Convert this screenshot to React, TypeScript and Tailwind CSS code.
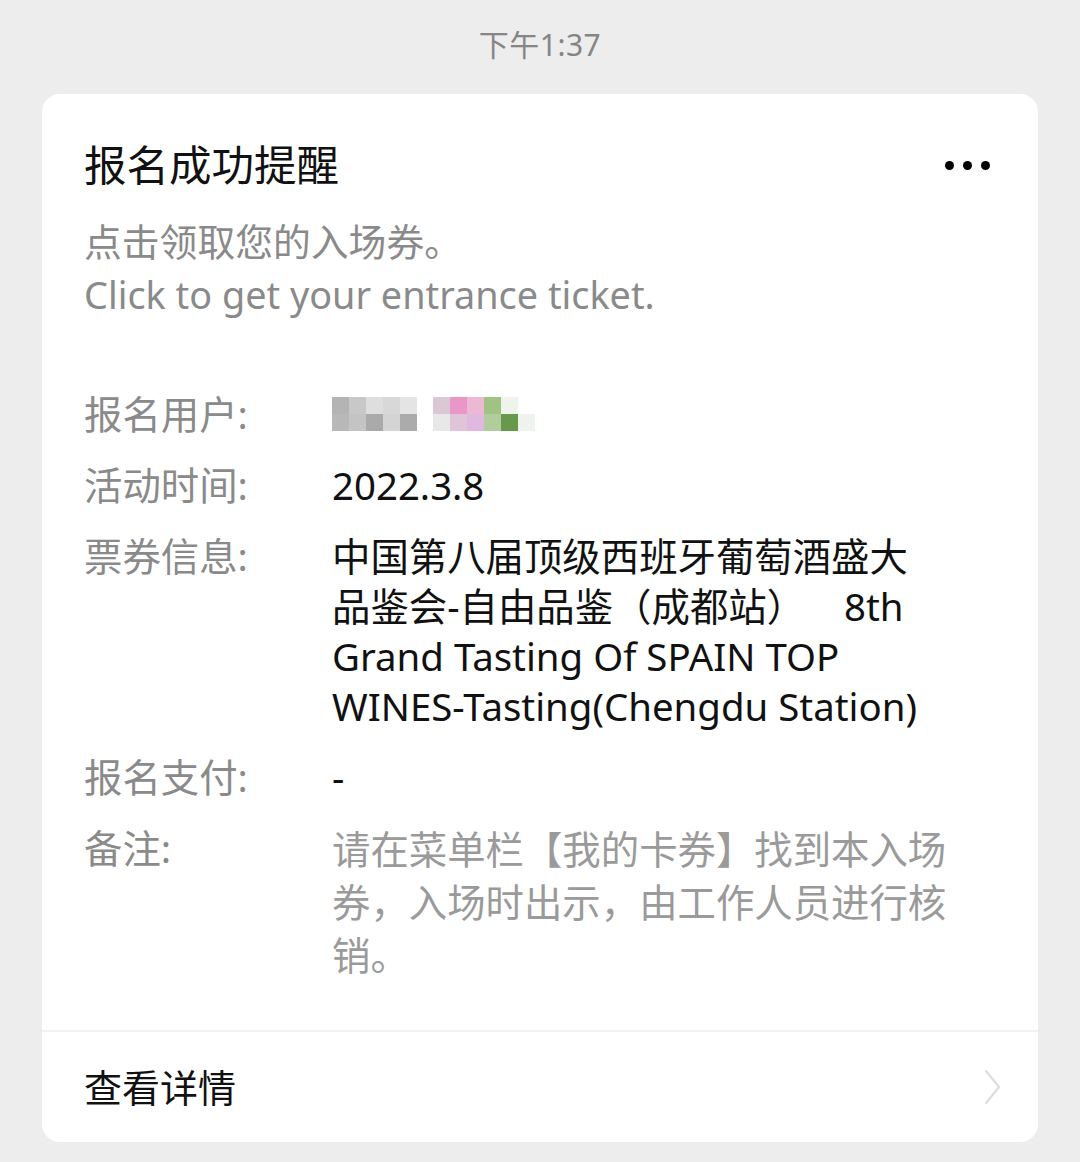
import React from "react";

const F = { fontFamily: '"Noto Sans", "Noto Sans CJK SC", sans-serif' };

function Row({ label, children, muted }: { label: string; children: React.ReactNode; muted?: boolean }) {
  return (
    <div className="flex">
      <div className="w-[248px] shrink-0 text-[#8a8a8a]">{label}</div>
      <div className={muted ? "text-[#9a9a9a]" : "text-[#111111]"}>{children}</div>
    </div>
  );
}

export default function App() {
  return (
    <div className="w-[1080px] h-[1162px] bg-[#ededed] flex flex-col items-center overflow-hidden" style={F}>
      <div className="h-[94px] pt-[24px] text-[30px] leading-[42px] text-[#858585] tracking-[0.5px]">下午1:37</div>
      <div className="w-[996px] bg-white rounded-[18px] flex flex-col">
        <div className="px-[42px] pt-[45px] pb-[48px]">
          <div className="flex items-center justify-between">
            <div className="text-[42.5px] leading-[52px] text-[#111111]">报名成功提醒</div>
            <div className="flex gap-[9px] mr-[6px]">
              <span className="w-[9px] h-[9px] rounded-full bg-black" />
              <span className="w-[9px] h-[9px] rounded-full bg-black" />
              <span className="w-[9px] h-[9px] rounded-full bg-black" />
            </div>
          </div>
          <div className="mt-[24px] text-[37.8px] leading-[53px] text-[#8a8a8a]">
            <div>点击领取您的入场券。</div>
            <div>Click to get your entrance ticket.</div>
          </div>
          <div className="mt-[68px] flex flex-col gap-[21px] text-[38.4px] leading-[50px]">
            <Row label="报名用户:">
              <div className="flex items-center h-[50px] gap-[16px]">
                <div className="flex flex-col">
                  <div className="flex">
                    <span className="w-[17px] h-[17px] bg-[#b4b4b4]" />
                    <span className="w-[17px] h-[17px] bg-[#c8c8c8]" />
                    <span className="w-[17px] h-[17px] bg-[#dedede]" />
                    <span className="w-[17px] h-[17px] bg-[#d8d8d8]" />
                    <span className="w-[17px] h-[17px] bg-[#e4e4e4]" />
                  </div>
                  <div className="flex">
                    <span className="w-[17px] h-[17px] bg-[#b8b8b8]" />
                    <span className="w-[17px] h-[17px] bg-[#c4c4c4]" />
                    <span className="w-[17px] h-[17px] bg-[#aaaaaa]" />
                    <span className="w-[17px] h-[17px] bg-[#d4d4d4]" />
                    <span className="w-[17px] h-[17px] bg-[#ababab]" />
                  </div>
                </div>
                <div className="flex flex-col">
                  <div className="flex">
                    <span className="w-[17px] h-[17px] bg-[#dcc8d4]" />
                    <span className="w-[17px] h-[17px] bg-[#e897c8]" />
                    <span className="w-[17px] h-[17px] bg-[#ecb8d4]" />
                    <span className="w-[17px] h-[17px] bg-[#a0c282]" />
                    <span className="w-[17px] h-[17px] bg-[#eef3ec]" />
                  </div>
                  <div className="flex">
                    <span className="w-[17px] h-[17px] bg-[#e8e8e8]" />
                    <span className="w-[17px] h-[17px] bg-[#e0c4d8]" />
                    <span className="w-[17px] h-[17px] bg-[#e0b8e0]" />
                    <span className="w-[17px] h-[17px] bg-[#b2cc9e]" />
                    <span className="w-[17px] h-[17px] bg-[#66994c]" />
                    <span className="w-[17px] h-[17px] bg-[#eef3ec]" />
                  </div>
                </div>
              </div>
            </Row>
            <Row label="活动时间:">2022.3.8</Row>
            <Row label="票券信息:">
              <div>中国第八届顶级西班牙葡萄酒盛大</div>
              <div className="whitespace-pre">品鉴会-自由品鉴（成都站）   <span className="pl-[9px]">8th</span></div>
              <div>Grand Tasting Of SPAIN TOP</div>
              <div>WINES-Tasting(Chengdu Station)</div>
            </Row>
            <Row label="报名支付:">-</Row>
            <Row label="备注:" muted>
              <div className="leading-[53px]">
                <div>请在菜单栏【我的卡券】找到本入场</div>
                <div>券，入场时出示，由工作人员进行核</div>
                <div>销。</div>
              </div>
            </Row>
          </div>
        </div>
        <div className="h-[2px] bg-[#f2f2f2]" />
        <div className="h-[110px] pl-[42px] pr-[36px] flex items-center justify-between">
          <div className="text-[38px] text-[#111111]">查看详情</div>
          <svg width="18" height="36" viewBox="0 0 18 36">
            <path d="M2 2 L15 18 L2 34" fill="none" stroke="#dcdcdc" strokeWidth="2" strokeLinecap="round" strokeLinejoin="round" />
          </svg>
        </div>
      </div>
    </div>
  );
}
